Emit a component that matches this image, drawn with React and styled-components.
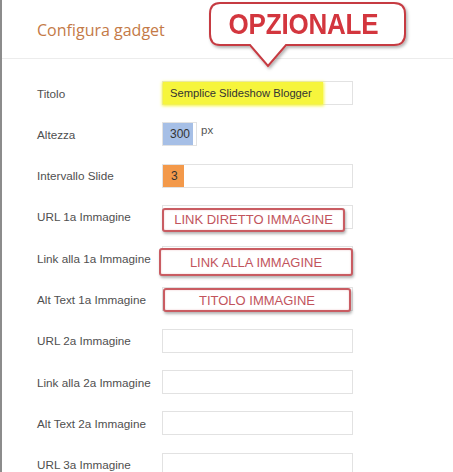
import React from 'react';
import styled, { createGlobalStyle } from 'styled-components';

const GlobalStyle = createGlobalStyle`
  html, body {
    margin: 0;
    padding: 0;
    background: #ffffff;
  }
  body {
    font-family: 'Liberation Sans', Arial, sans-serif;
  }
`;

const Page = styled.div`
  position: relative;
  min-height: 472px;
  border-left: 2px solid #8c8c8c;
  overflow: hidden;
`;

const Header = styled.div`
  position: relative;
  height: 58px;
  padding-left: 35px;
  display: flex;
  align-items: center;
  border-bottom: 1px solid #ececec;
`;

const Title = styled.h2`
  margin: 0;
  padding-top: 1px;
  font-family: 'Open Sans', sans-serif;
  font-weight: 400;
  font-size: 16px;
  color: #c47a47;
`;

// big speech bubble over the header
const Bubble = styled.div`
  position: absolute;
  left: 206px;
  top: 1px;
  width: 204px;
  height: 72px;
`;

const BubbleText = styled.span`
  position: absolute;
  left: -4px;
  top: 0;
  width: 199px;
  height: 46px;
  display: flex;
  align-items: center;
  justify-content: center;
  font-family: 'Liberation Sans', Arial, sans-serif;
  font-weight: 700;
  font-size: 26px;
  color: #d3363e;
  transform: scaleY(1.15);
  letter-spacing: -0.2px;
`;

const Form = styled.div`
  padding: 22px 0 0 35px;
  display: flex;
  flex-direction: column;
  gap: 17.3px;
`;

const Row = styled.div`
  display: grid;
  grid-template-columns: 125px 1fr;
  align-items: center;
  height: 24px;
`;

const Label = styled.span`
  font-size: 11.7px;
  color: #4f4f4f;
`;

const Field = styled.div`
  position: relative;
  display: flex;
  align-items: flex-start;
  gap: 4px;
  height: 24px;
`;

const Input = styled.div`
  box-sizing: border-box;
  width: ${p => p.$w || 191}px;
  height: 24px;
  border: 1px solid #e2e2e2;
  background: #fff;
  display: flex;
  align-items: stretch;
`;

const Mark = styled.span`
  display: flex;
  align-items: center;
  box-sizing: border-box;
  width: ${p => p.$w}px;
  padding-left: ${p => p.$pad}px;
  background: ${p => p.$bg};
  box-shadow: ${p => p.$glow ? `0 1px 3px 1px ${p.$bg}` : 'none'};
  font-size: ${p => p.$fs || 12}px;
  color: #333;
`;

const Unit = styled.span`
  font-size: 11.5px;
  color: #555;
  margin-top: 2px;
`;

const Note = styled.div`
  position: absolute;
  left: ${p => p.$x}px;
  top: ${p => p.$y}px;
  width: ${p => p.$w}px;
  height: ${p => p.$h}px;
  box-sizing: border-box;
  border: 2px solid #c95c62;
  border-radius: 3px;
  background: #fff;
  box-shadow: inset 0 0 2px rgba(201, 87, 93, 0.35), 1px 2px 3px rgba(0, 0, 0, 0.3);
  display: flex;
  align-items: center;
  justify-content: center;
  font-size: 13px;
  color: #c2545c;
`;

const rows = [
  { label: 'URL 2a Immagine' },
  { label: 'Link alla 2a Immagine' },
  { label: 'Alt Text 2a Immagine' },
  { label: 'URL 3a Immagine' },
];

function App() {
  return (
    <Page>
      <GlobalStyle />
      <Header>
        <Title>Configura gadget</Title>
        <Bubble>
          <svg width="204" height="72" viewBox="0 0 204 72">
            <defs>
              <filter id="sh" x="-10%" y="-10%" width="125%" height="130%">
                <feDropShadow dx="1.5" dy="2" stdDeviation="1.5" floodColor="#000" floodOpacity="0.3" />
              </filter>
            </defs>
            <path
              d="M12,2 H186 Q197,2 197,13 V33 Q197,44 186,44 H78 L60,65 L42,44 H12 Q2,44 2,33 V13 Q2,2 12,2 Z"
              fill="#fff"
              stroke="#c63b42"
              strokeWidth="2"
              filter="url(#sh)"
            />
          </svg>
          <BubbleText>OPZIONALE</BubbleText>
        </Bubble>
      </Header>
      <Form>
        <Row>
          <Label>Titolo</Label>
          <Field>
            <Input>
              <Mark $w={160} $pad={7} $fs={11.2} $bg="#f6f53c" $glow>Semplice Slideshow Blogger</Mark>
            </Input>
          </Field>
        </Row>
        <Row>
          <Label>Altezza</Label>
          <Field>
            <Input $w={35}>
              <Mark $w={30} $pad={7} $bg="#a6bfe6">300</Mark>
            </Input>
            <Unit>px</Unit>
          </Field>
        </Row>
        <Row>
          <Label>Intervallo Slide</Label>
          <Field>
            <Input>
              <Mark $w={21} $pad={8} $bg="#f3994a">3</Mark>
            </Input>
          </Field>
        </Row>
        <Row>
          <Label>URL 1a Immagine</Label>
          <Field>
            <Input />
            <Note $x={0} $y={3} $w={183} $h={24}>LINK DIRETTO IMMAGINE</Note>
          </Field>
        </Row>
        <Row>
          <Label>Link alla 1a Immagine</Label>
          <Field>
            <Input />
            <Note $x={-3} $y={2} $w={194} $h={28}>LINK ALLA IMMAGINE</Note>
          </Field>
        </Row>
        <Row>
          <Label>Alt Text 1a Immagine</Label>
          <Field>
            <Input />
            <Note $x={1} $y={1} $w={188} $h={24}>TITOLO IMMAGINE</Note>
          </Field>
        </Row>
        {rows.map(r => (
          <Row key={r.label}>
            <Label>{r.label}</Label>
            <Field>
              <Input />
            </Field>
          </Row>
        ))}
      </Form>
    </Page>
  );
}

export default App;
